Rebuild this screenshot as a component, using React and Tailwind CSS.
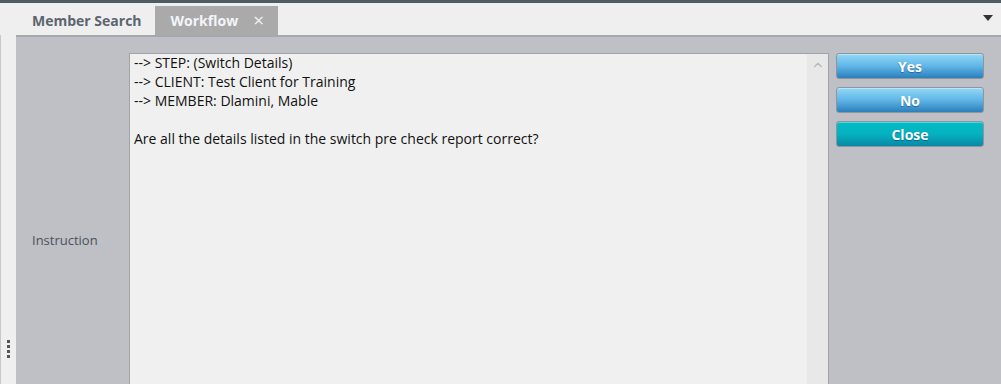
import { ChevronUp } from 'lucide-react'

const font = { fontFamily: '"Open Sans", "Noto Sans", sans-serif' }

function ActionButton({ label, teal }) {
  return (
    <button
      className={
        'h-[26px] w-full rounded-[3px] border border-[#8e959c] text-[14px] font-bold text-white [text-shadow:0_1px_1px_rgba(0,40,80,0.45)] shadow-[inset_0_1px_0_rgba(255,255,255,0.35)] ' +
        (teal
          ? 'bg-gradient-to-b from-[#00bcc6] via-[#05b2bf] to-[#0a88a6]'
          : 'bg-gradient-to-b from-[#93d8f7] via-[#5fb6e6] to-[#2a80bd]')
      }
    >
      {label}
    </button>
  )
}

export default function App() {
  const lines = [
    '--> STEP: (Switch Details)',
    '--> CLIENT: Test Client for Training',
    '--> MEMBER: Dlamini, Mable',
    '',
    'Are all the details listed in the switch pre check report correct?',
  ]

  return (
    <div className="w-[1001px] h-[384px] overflow-hidden flex flex-col bg-[#efefef]" style={font}>
      {/* top dark bar */}
      <div className="h-[3px] bg-[#4d5b65] shrink-0" />

      {/* Tabs */}
      <div className="h-[32px] shrink-0 flex items-end pl-[16px] relative">
        <div className="h-[29px] px-[16px] flex items-center text-[14px] font-bold text-[#5b6570]">
          Member Search
        </div>
        <div className="h-[29px] w-[123px] ml-[-3px] bg-[#aaaaaa] flex items-center pl-[16px] text-[14px] font-bold text-[#f3f5fa]">
          <span>Workflow</span>
          <span className="ml-[15px] text-[19px] font-normal leading-none text-[#f2f2f2]">×</span>
        </div>
        <div className="absolute right-[8px] top-[12px] w-0 h-0 border-l-[5px] border-r-[5px] border-t-[6px] border-l-transparent border-r-transparent border-t-[#333]" />
      </div>

      <div className="flex-1 flex min-h-0">
        {/* left gutter */}
        <div className="w-[16px] shrink-0 border-l border-[#c8c8c8] flex flex-col justify-end items-center pb-[26px]">
          <div className="flex flex-col gap-[2px]">
            <div className="w-[3px] h-[3px] bg-[#555]" />
            <div className="w-[3px] h-[3px] bg-[#555]" />
            <div className="w-[3px] h-[3px] bg-[#555]" />
            <div className="w-[3px] h-[3px] bg-[#555]" />
          </div>
        </div>

        {/* panel */}
        <div className="flex-1 bg-[#bfc0c5] border-t-[2px] border-[#a7a8ab] flex pt-[16px] min-w-0">
          <div className="w-[113px] shrink-0 pl-[16px] pt-[174px]">
            <span className="text-[13px] text-[#4b515b]">Instruction</span>
          </div>

          <div className="w-[700px] shrink-0 bg-[#f0f0f0] border-l border-t border-r border-[#a2a3a6] flex">
            <div className="flex-1 pl-[4px] text-[14px] leading-[19px] text-[#111] -mt-[1px]">
              {lines.map((l, i) => (
                <div key={i} className="h-[19px]">{l}</div>
              ))}
            </div>
            <div className="w-[21px] bg-[#e8e8e8] flex justify-center pt-[4px]">
              <ChevronUp size={14} strokeWidth={2} color="#b8b8b8" />
            </div>
          </div>

          <div className="w-[148px] shrink-0 ml-[7px] flex flex-col gap-[8px]">
            <ActionButton label="Yes" />
            <ActionButton label="No" />
            <ActionButton label="Close" teal />
          </div>
        </div>
      </div>
    </div>
  )
}
